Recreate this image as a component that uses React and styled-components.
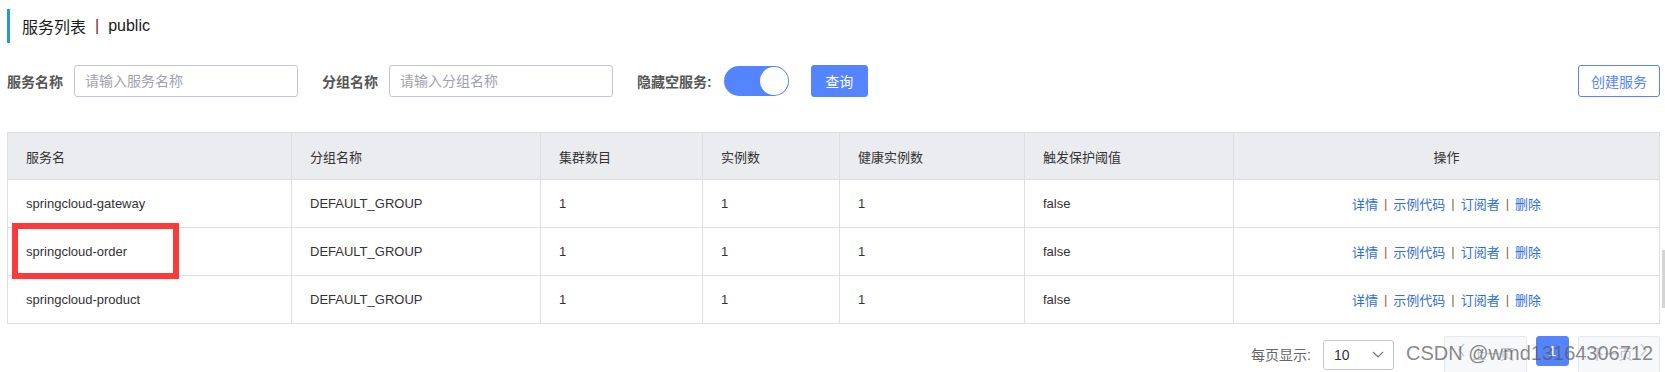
import React from "react";
import styled, { createGlobalStyle } from "styled-components";

const GlobalStyle = createGlobalStyle`
  html, body { margin: 0; padding: 0; background: #fff; }
  body {
    font-family: "Liberation Sans", "Noto Sans CJK SC", sans-serif;
    color: #333;
    overflow: hidden;
  }
  * { box-sizing: border-box; }
`;

const Page = styled.div`
  position: relative;
  width: 1665px;
  height: 372px;
  padding: 9px 5px 0 7px;
`;

const TitleBar = styled.div`
  height: 34px;
  border-left: 3px solid #1e9bd0;
  padding-left: 12px;
  display: flex;
  align-items: center;
  font-size: 16px;
  color: #1a1a1a;
`;

const TitleSep = styled.span`
  margin: 0 9px;
  color: #7a1f1f;
`;

const FilterRow = styled.div`
  margin-top: 22px;
  height: 32px;
  display: flex;
  align-items: center;
`;

const Label = styled.span`
  font-size: 14px;
  font-weight: 700;
  color: #555;
  margin-left: ${(p) => p.$ml || 0}px;
  margin-right: ${(p) => p.$mr || 11}px;
  white-space: nowrap;
`;

const Input = styled.input`
  width: 224px;
  height: 32px;
  border: 1px solid #c4c6cf;
  border-radius: 3px;
  padding: 0 10px;
  font-size: 14px;
  font-family: inherit;
  color: #333;
  outline: none;
  &::placeholder { color: #a0a2ab; }
`;

const Switch = styled.div`
  position: relative;
  width: 65px;
  height: 30px;
  border-radius: 15px;
  background: #5584ff;
  margin-right: 22px;
`;

const Knob = styled.span`
  position: absolute;
  top: 1px;
  right: 1px;
  width: 28px;
  height: 28px;
  border-radius: 50%;
  background: #fff;
`;

const Button = styled.button`
  height: 32px;
  padding: 0;
  width: ${(p) => p.$w}px;
  border-radius: 3px;
  font-size: 14px;
  font-family: inherit;
  cursor: pointer;
  border: 1px solid #5584ff;
  background: ${(p) => (p.$primary ? "#5584ff" : "#fff")};
  color: ${(p) => (p.$primary ? "#fff" : "#5584ff")};
  margin-left: ${(p) => (p.$right ? "auto" : "0")};
`;

const COLS = "284px 249px 162px 137px 185px 209px 426px";

const Table = styled.div`
  margin-top: 35px;
  width: 1653px;
  border-left: 1px solid #dcdee3;
  border-top: 1px solid #dcdee3;
  font-size: 13px;
`;

const Row = styled.div`
  display: grid;
  grid-template-columns: ${COLS};
  height: ${(p) => (p.$head ? 47 : 48)}px;
  background: ${(p) => (p.$head ? "#ebecf0" : "#fff")};
`;

const Cell = styled.div`
  border-right: 1px solid #dcdee3;
  border-bottom: 1px solid #dcdee3;
  padding-left: ${(p) => (p.$center ? 0 : 18)}px;
  display: flex;
  align-items: center;
  justify-content: ${(p) => (p.$center ? "center" : "flex-start")};
  color: #333;
  white-space: nowrap;
`;

const OpLink = styled.a`
  color: #2f6fd6;
  text-decoration: none;
  cursor: pointer;
`;

const OpSep = styled.span`
  margin: 0 6px;
  color: #8a6a3a;
`;

const Pager = styled.div`
  margin-top: 12px;
  display: flex;
  align-items: flex-start;
  justify-content: flex-end;
`;

const PagerLabel = styled.span`
  margin-top: 8px;
  font-size: 14px;
  color: #666;
  margin-right: 12px;
`;

const Select = styled.div`
  margin-top: 4px;
  width: 71px;
  height: 30px;
  border: 1px solid #c4c6cf;
  border-radius: 3px;
  display: flex;
  align-items: center;
  justify-content: space-between;
  padding: 0 9px 0 10px;
  font-size: 14px;
  color: #333;
  margin-right: 50px;
`;

const PageBtn = styled.div`
  height: ${(p) => (p.$active ? 30 : 40)}px;
  width: ${(p) => p.$w}px;
  margin-left: ${(p) => p.$ml || 0}px;
  border-radius: 3px;
  border: 1px solid ${(p) => (p.$active ? "#5584ff" : "#e6e7eb")};
  background: ${(p) => (p.$active ? "#5584ff" : "#f7f8fa")};
  color: ${(p) => (p.$active ? "#fff" : "#c4c6cf")};
  display: flex;
  align-items: ${(p) => (p.$active ? "center" : "flex-start")};
  padding-top: ${(p) => (p.$active ? 0 : 6)}px;
  justify-content: center;
  gap: 6px;
  font-size: 14px;
`;

const Annotation = styled.div`
  position: absolute;
  left: 12px;
  top: 223px;
  width: 167px;
  height: 56px;
  border: 6px solid #fd3a3a;
`;

const Watermark = styled.div`
  position: absolute;
  left: 1406px;
  top: 341px;
  font-family: "Liberation Sans", Arial, sans-serif;
  font-size: 20px;
  line-height: 24px;
  color: rgba(90, 90, 90, 0.72);
  white-space: nowrap;
  pointer-events: none;
`;

const ScrollThumb = styled.div`
  position: absolute;
  right: 0;
  top: 250px;
  width: 3px;
  height: 58px;
  background: #d4d4d4;
`;

const Chevron = ({ dir = "down", color = "#888", w = 12, h = 8 }) => {
  const d =
    dir === "down"
      ? "M1 1 L6 6 L11 1"
      : dir === "left"
      ? "M7 1 L2 7 L7 13"
      : "M2 1 L7 7 L2 13";
  const vb = dir === "down" ? "0 0 12 8" : "0 0 9 14";
  return (
    <svg width={w} height={h} viewBox={vb} fill="none">
      <path d={d} stroke={color} strokeWidth="1.2" />
    </svg>
  );
};

const services = [
  "springcloud-gateway",
  "springcloud-order",
  "springcloud-product",
];

const headers = [
  "服务名",
  "分组名称",
  "集群数目",
  "实例数",
  "健康实例数",
  "触发保护阈值",
];

export default function App() {
  return (
    <>
      <GlobalStyle />
      <Page>
        <TitleBar>
          <span>服务列表</span>
          <TitleSep>|</TitleSep>
          <span>public</span>
        </TitleBar>

        <FilterRow>
          <Label>服务名称</Label>
          <Input placeholder="请输入服务名称" />
          <Label $ml={24}>分组名称</Label>
          <Input placeholder="请输入分组名称" />
          <Label $ml={24} $mr={12}>隐藏空服务:</Label>
          <Switch>
            <Knob />
          </Switch>
          <Button $primary $w={57}>查询</Button>
          <Button $right $w={82}>创建服务</Button>
        </FilterRow>

        <Table>
          <Row $head>
            {headers.map((h) => (
              <Cell key={h}>{h}</Cell>
            ))}
            <Cell $center>操作</Cell>
          </Row>
          {services.map((s) => (
            <Row key={s}>
              <Cell>{s}</Cell>
              <Cell>DEFAULT_GROUP</Cell>
              <Cell>1</Cell>
              <Cell>1</Cell>
              <Cell>1</Cell>
              <Cell>false</Cell>
              <Cell $center>
                <OpLink>详情</OpLink>
                <OpSep>|</OpSep>
                <OpLink>示例代码</OpLink>
                <OpSep>|</OpSep>
                <OpLink>订阅者</OpLink>
                <OpSep>|</OpSep>
                <OpLink>删除</OpLink>
              </Cell>
            </Row>
          ))}
        </Table>

        <Pager>
          <PagerLabel>每页显示:</PagerLabel>
          <Select>
            <span>10</span>
            <Chevron dir="down" color="#777" />
          </Select>
          <PageBtn $w={83}>
            <Chevron dir="left" color="#c4c6cf" w={9} h={14} />
            <span>上一页</span>
          </PageBtn>
          <PageBtn $active $w={33} $ml={9}>1</PageBtn>
          <PageBtn $w={82} $ml={9}>
            <span>下一页</span>
            <Chevron dir="right" color="#c4c6cf" w={9} h={14} />
          </PageBtn>
        </Pager>

        <Annotation />
        <Watermark>CSDN @wmd13164306712</Watermark>
        <ScrollThumb />
      </Page>
    </>
  );
}
